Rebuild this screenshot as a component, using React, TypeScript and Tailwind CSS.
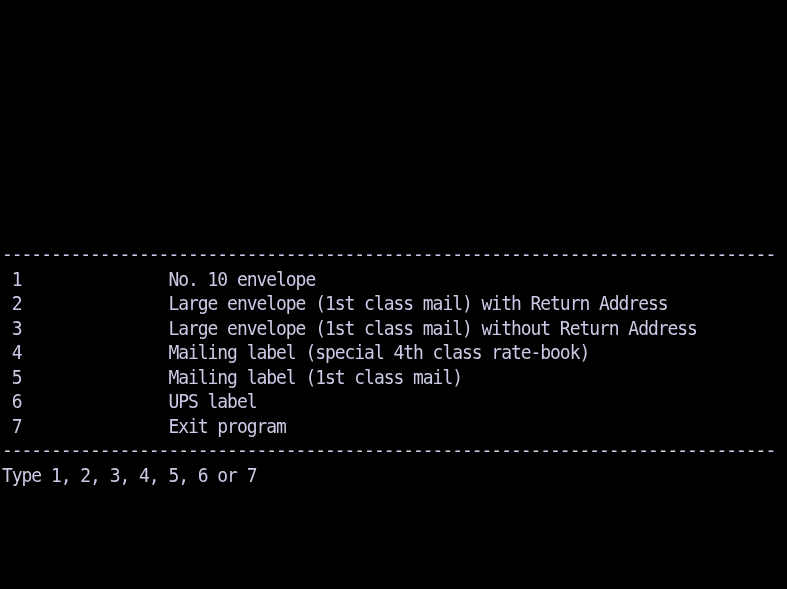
import React from "react";

const dashes = "-".repeat(79);

const items: [string, string][] = [
  ["1", "No. 10 envelope"],
  ["2", "Large envelope (1st class mail) with Return Address"],
  ["3", "Large envelope (1st class mail) without Return Address"],
  ["4", "Mailing label (special 4th class rate-book)"],
  ["5", "Mailing label (1st class mail)"],
  ["6", "UPS label"],
  ["7", "Exit program"],
];

function Row({ children }: { children: React.ReactNode }) {
  return (
    <div className="h-[24.5px] leading-[24.5px] whitespace-pre scale-y-[1.08]">{children}</div>
  );
}

export default function App() {
  return (
    <div className="w-[787px] h-[589px] bg-black overflow-hidden">
      <div
        className="pt-[243px] pl-[2px] text-[18px] tracking-[-1.05px] text-[#cacae6] blur-[0.35px]"
        style={{ fontFamily: '"DejaVu Sans Mono", "Liberation Mono", monospace' }}
      >
        <Row>{dashes}</Row>
        {items.map(([n, label]) => (
          <Row key={n}>{" " + n + " ".repeat(15) + label}</Row>
        ))}
        <Row>{dashes}</Row>
        <Row>Type 1, 2, 3, 4, 5, 6 or 7</Row>
      </div>
    </div>
  );
}
